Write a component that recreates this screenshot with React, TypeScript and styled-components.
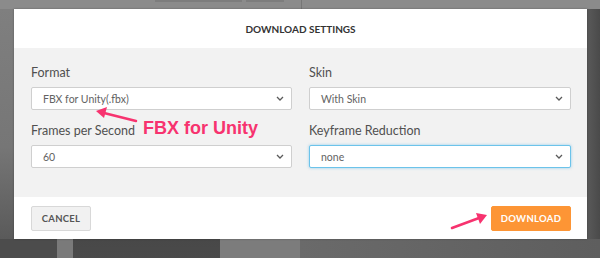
import styled, { createGlobalStyle } from "styled-components";

const GlobalStyle = createGlobalStyle`
  html, body {
    margin: 0;
    padding: 0;
    width: 600px;
    height: 258px;
    overflow: hidden;
  }
  body {
    font-family: Lato, "Open Sans", sans-serif;
  }
`;

// dimmed 3d viewer behind the modal
const Backdrop = styled.div`
  position: relative;
  width: 600px;
  height: 258px;
  box-sizing: border-box;
  padding: 9px 13px 19px 14px;
  background:
    linear-gradient(#7d7d7d, #7d7d7d) 155px 0 / 87px 2px no-repeat,
    linear-gradient(#7d7d7d, #7d7d7d) 246px 0 / 38px 2px no-repeat,
    linear-gradient(#767676, #767676) 301px 0 / 1px 9px no-repeat,
    linear-gradient(#8b8b8b, #8b8b8b) 0 0 / 100% 9px no-repeat,
    linear-gradient(#4c4c4c, #4c4c4c) 0 239px / 57px 19px no-repeat,
    linear-gradient(#7a7a7a, #7a7a7a) 57px 239px / 16px 19px no-repeat,
    linear-gradient(#484848, #4a4a4a) 73px 239px / 147px 19px no-repeat,
    linear-gradient(#7c7c7c, #7c7c7c) 220px 239px / 80px 19px no-repeat,
    linear-gradient(to right, #6a6a6a, #5e5e5e) 300px 239px / 300px 19px no-repeat,
    linear-gradient(to right, #5a5a5a, #4a4a4a) 587px 9px / 13px 230px no-repeat,
    linear-gradient(#7f7f7f, #767676 60%, #5a5a5a) 0 9px / 14px 230px no-repeat;
`;

const Dialog = styled.div`
  width: 573px;
  height: 230px;
  background: #fff;
  display: flex;
  flex-direction: column;
  box-shadow: 0 0 2px rgba(0, 0, 0, 0.3);
`;

const Header = styled.div`
  height: 39px;
  display: flex;
  align-items: center;
  justify-content: center;
  font-size: 10px;
  font-weight: 700;
  color: #333;
`;

const Body = styled.div`
  flex: 1;
  background: #f2f2f2;
  padding: 16px 16px 0 17px;
  display: grid;
  grid-template-columns: 261px 262px;
  column-gap: 17px;
  row-gap: 12px;
  align-content: start;
`;

const Field = styled.div`
  display: flex;
  flex-direction: column;
`;

const Label = styled.div`
  height: 18px;
  line-height: 18px;
  font-size: 12.5px;
  color: #505050;
  margin-bottom: 5px;
`;

const SelectBox = styled.div<{ focused?: boolean }>`
  height: 23px;
  box-sizing: border-box;
  background: #fff;
  border: 1px solid ${(p) => (p.focused ? "#6cc3ea" : "#cfcfcf")};
  box-shadow: ${(p) => (p.focused ? "0 0 3px rgba(102, 190, 233, 0.7)" : "none")};
  border-radius: 2px;
  display: flex;
  align-items: center;
  justify-content: space-between;
  padding: 0 7px 0 11px;
  font-size: 10.5px;
  color: #636363;
`;

const Footer = styled.div`
  height: 42px;
  box-sizing: border-box;
  padding: 9px 16px 0 17px;
  display: flex;
  justify-content: space-between;
  align-items: flex-start;
`;

const Button = styled.button<{ primary?: boolean }>`
  height: 25px;
  width: ${(p) => (p.primary ? "80px" : "60px")};
  border-radius: 2px;
  border: 1px solid ${(p) => (p.primary ? "#fd9535" : "#d8d8d8")};
  background: ${(p) => (p.primary ? "#fd9535" : "#f1f1f1")};
  color: ${(p) => (p.primary ? "#fff" : "#555")};
  font-family: Lato, "Open Sans", sans-serif;
  font-size: 9.5px;
  font-weight: 700;
  letter-spacing: 0.3px;
  padding: 0;
`;

const Note = styled.div`
  position: absolute;
  left: 143px;
  top: 117px;
  font-family: "Liberation Sans", Arial, sans-serif;
  font-size: 18px;
  font-weight: 700;
  color: #f7336f;
  line-height: 22px;
`;

const Arrow = styled.svg`
  position: absolute;
  left: 0;
  top: 0;
  pointer-events: none;
`;

const Chevron = () => (
  <svg width="8" height="5" viewBox="0 0 8 5">
    <path d="M1 1l3 3 3-3" fill="none" stroke="#5a5a5a" strokeWidth="1.3" />
  </svg>
);

const Select = ({ value, focused }: { value: string; focused?: boolean }) => (
  <SelectBox focused={focused}>
    <span>{value}</span>
    <Chevron />
  </SelectBox>
);

export default function App() {
  return (
    <>
      <GlobalStyle />
      <Backdrop>
        <Dialog>
          <Header>DOWNLOAD SETTINGS</Header>
          <Body>
            <Field>
              <Label>Format</Label>
              <Select value="FBX for Unity(.fbx)" />
            </Field>
            <Field>
              <Label>Skin</Label>
              <Select value="With Skin" />
            </Field>
            <Field>
              <Label>Frames per Second</Label>
              <Select value="60" />
            </Field>
            <Field>
              <Label>Keyframe Reduction</Label>
              <Select value="none" focused />
            </Field>
          </Body>
          <Footer>
            <Button>CANCEL</Button>
            <Button primary>DOWNLOAD</Button>
          </Footer>
        </Dialog>
        <Note>FBX for Unity</Note>
        <Arrow width="600" height="258" viewBox="0 0 600 258">
          <line x1="136" y1="121" x2="104" y2="113" stroke="#f7336f" strokeWidth="2.5" strokeLinecap="round" />
          <path d="M96 111 L107 107 L104 118 Z" fill="#f7336f" />
          <line x1="452" y1="228" x2="479" y2="218" stroke="#f7336f" strokeWidth="2.5" strokeLinecap="round" />
          <path d="M487 215 L476 213 L480 224 Z" fill="#f7336f" />
        </Arrow>
      </Backdrop>
    </>
  );
}
